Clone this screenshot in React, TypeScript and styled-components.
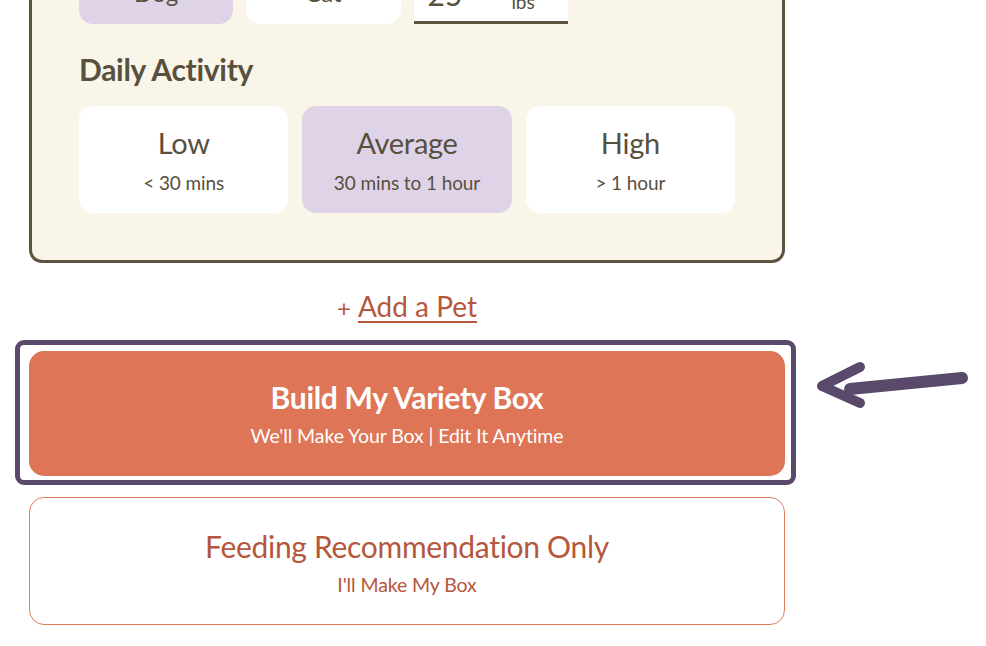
import React from "react";
import styled, { createGlobalStyle } from "styled-components";

const Global = createGlobalStyle`
  html, body { margin: 0; padding: 0; background: #ffffff; }
  body { font-family: Lato, "Open Sans", sans-serif; overflow: hidden; }
  * { box-sizing: border-box; }
`;

const Page = styled.div`
  position: relative;
  width: 986px;
  height: 646px;
  overflow: hidden;
`;

const Column = styled.div`
  width: 756px;
  margin: -73px 0 0 29px;
  display: flex;
  flex-direction: column;
`;

const Card = styled.section`
  background: #f9f5e9;
  border: 3px solid #5e5240;
  border-radius: 13px;
  padding: 30px 47px 47px 47px;
`;

const TypeRow = styled.div`
  display: grid;
  grid-template-columns: repeat(4, 1fr);
  gap: 13px;
  height: 64px;
`;

const Choice = styled.div<{ $active?: boolean }>`
  background: ${(p) => (p.$active ? "#dfd3e8" : "#ffffff")};
  border-radius: 14px;
  display: flex;
  align-items: center;
  justify-content: center;
  color: #58503e;
  font-size: 24px;
`;

const WeightField = styled.div`
  background: #ffffff;
  border-bottom: 3px solid #5e5240;
  display: flex;
  align-items: flex-end;
  justify-content: space-between;
  padding: 0 33px 0 14px;
  color: #58503e;
`;

const WeightValue = styled.span`
  font-size: 30px;
  line-height: 34px;
  margin-bottom: 10px;
`;

const WeightUnit = styled.span`
  font-size: 19px;
  margin-bottom: 8px;
`;

const Heading = styled.h2`
  margin: 27px 0 19px;
  font-size: 30px;
  line-height: 36px;
  font-weight: 700;
  color: #58503e;
  letter-spacing: -0.3px;
`;

const ActivityGrid = styled.div`
  display: grid;
  grid-template-columns: repeat(3, 1fr);
  gap: 14px;
`;

const ActivityOption = styled.div<{ $active?: boolean }>`
  height: 107px;
  border-radius: 14px;
  background: ${(p) => (p.$active ? "#dfd3e8" : "#ffffff")};
  display: flex;
  flex-direction: column;
  align-items: center;
  padding-top: 19px;
  color: #58503e;
`;

const OptionTitle = styled.div`
  font-size: 29px;
  line-height: 36px;
  letter-spacing: -0.3px;
`;

const OptionSub = styled.div`
  font-size: 19px;
  line-height: 24px;
  margin-top: 10px;
  letter-spacing: -0.1px;
`;

const AddPet = styled.div`
  margin: 26px 0 0;
  text-align: center;
  color: #b5573d;
  font-size: 28px;
  line-height: 34px;
`;

const Plus = styled.span`
  font-size: 24px;
  margin-right: 7px;
`;

const AddLink = styled.a`
  color: #b5573d;
  text-decoration: underline;
  text-decoration-thickness: 2px;
  text-underline-offset: 4px;
  cursor: pointer;
`;

const Highlight = styled.div`
  margin: 15px -11px 0 -14px;
  border: 5px solid #594a6b;
  border-radius: 9px;
  padding: 6px 6px 4px 9px;
  background: #ffffff;
`;

const PrimaryButton = styled.button`
  width: 100%;
  height: 125px;
  border: none;
  border-radius: 15px;
  background: #dd7556;
  color: #ffffff;
  font-family: inherit;
  display: flex;
  flex-direction: column;
  align-items: center;
  justify-content: center;
  cursor: pointer;
`;

const SecondaryButton = styled.button`
  width: 100%;
  height: 128px;
  margin-top: 12px;
  padding-top: 3px;
  border: 1.5px solid #e07a5f;
  border-radius: 15px;
  background: #ffffff;
  color: #b5573d;
  font-family: inherit;
  display: flex;
  flex-direction: column;
  align-items: center;
  justify-content: center;
  cursor: pointer;
`;

const ButtonTitle = styled.span<{ $bold?: boolean }>`
  font-size: 30px;
  font-weight: ${(p) => (p.$bold ? 700 : 400)};
  line-height: 36px;
  letter-spacing: -0.3px;
`;

const ButtonSub = styled.span`
  font-size: 19.5px;
  line-height: 24px;
  margin-top: 9px;
  letter-spacing: -0.1px;
`;

const Arrow = styled.svg`
  position: absolute;
  left: 810px;
  top: 355px;
`;

export default function App() {
  return (
    <Page>
      <Global />
      <Column>
        <Card>
          <TypeRow>
            <Choice $active>Dog</Choice>
            <Choice>Cat</Choice>
            <WeightField>
              <WeightValue>25</WeightValue>
              <WeightUnit>lbs</WeightUnit>
            </WeightField>
          </TypeRow>
          <Heading>Daily Activity</Heading>
          <ActivityGrid>
            <ActivityOption>
              <OptionTitle>Low</OptionTitle>
              <OptionSub>&lt; 30 mins</OptionSub>
            </ActivityOption>
            <ActivityOption $active>
              <OptionTitle>Average</OptionTitle>
              <OptionSub>30 mins to 1 hour</OptionSub>
            </ActivityOption>
            <ActivityOption>
              <OptionTitle>High</OptionTitle>
              <OptionSub>&gt; 1 hour</OptionSub>
            </ActivityOption>
          </ActivityGrid>
        </Card>
        <AddPet>
          <Plus>+</Plus>
          <AddLink>Add a Pet</AddLink>
        </AddPet>
        <Highlight>
          <PrimaryButton>
            <ButtonTitle $bold>Build My Variety Box</ButtonTitle>
            <ButtonSub>We'll Make Your Box | Edit It Anytime</ButtonSub>
          </PrimaryButton>
        </Highlight>
        <SecondaryButton>
          <ButtonTitle>Feeding Recommendation Only</ButtonTitle>
          <ButtonSub>I'll Make My Box</ButtonSub>
        </SecondaryButton>
      </Column>
      <Arrow width="165" height="60" viewBox="0 0 165 60">
        <path
          d="M152 23 C 120 26, 80 30, 40 34"
          fill="none"
          stroke="#594a6b"
          strokeWidth="12"
          strokeLinecap="round"
        />
        <path
          d="M50 12 L 12 31 L 50 48"
          fill="none"
          stroke="#594a6b"
          strokeWidth="10"
          strokeLinecap="round"
          strokeLinejoin="round"
        />
      </Arrow>
    </Page>
  );
}
